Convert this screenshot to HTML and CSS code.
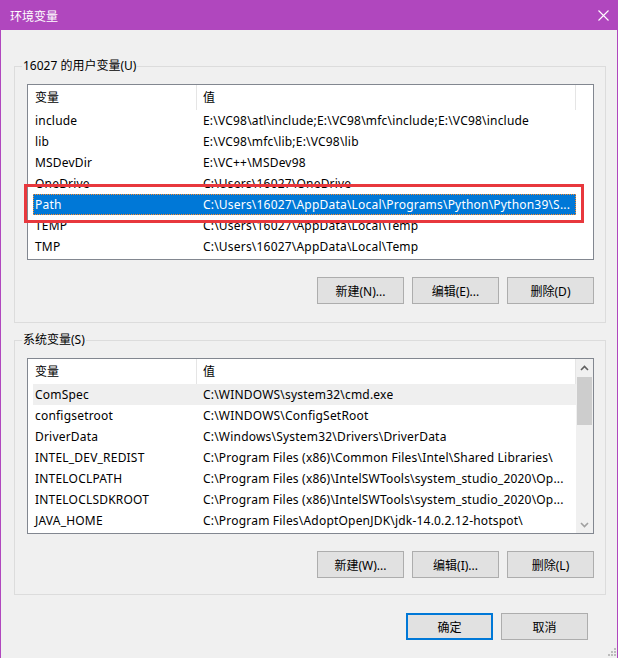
FILE: index.html
```html
<!DOCTYPE html>
<html lang="zh-CN">
<head>
  <meta charset="UTF-8">
  <title>环境变量</title>
  <link rel="stylesheet" href="styles.css">
</head>
<body>
  <div class="window">
    <div class="titlebar">
      <span class="title">环境变量</span>
      <svg class="close" width="11" height="11" viewBox="0 0 11 11">
        <path d="M0.5 0.5 L10.5 10.5 M10.5 0.5 L0.5 10.5" stroke="#fff" stroke-width="1.1" fill="none"/>
      </svg>
    </div>

    <div class="client">
      <fieldset class="group">
        <legend>16027 的用户变量(U)</legend>
        <div class="listbox">
          <div class="list-area">
            <div class="list-header">
              <div class="col-name">变量</div>
              <div class="col-value">值</div>
            </div>
            <div class="row"><span class="name">include</span><span class="value">E:\VC98\atl\include;E:\VC98\mfc\include;E:\VC98\include</span></div>
            <div class="row"><span class="name">lib</span><span class="value">E:\VC98\mfc\lib;E:\VC98\lib</span></div>
            <div class="row"><span class="name">MSDevDir</span><span class="value">E:\VC++\MSDev98</span></div>
            <div class="row"><span class="name">OneDrive</span><span class="value">C:\Users\16027\OneDrive</span></div>
            <div class="row selected"><span class="name">Path</span><span class="value">C:\Users\16027\AppData\Local\Programs\Python\Python39\S...</span></div>
            <div class="row"><span class="name">TEMP</span><span class="value">C:\Users\16027\AppData\Local\Temp</span></div>
            <div class="row"><span class="name">TMP</span><span class="value">C:\Users\16027\AppData\Local\Temp</span></div>
          </div>
          <div class="vscroll empty"></div>
        </div>
        <div class="buttons">
          <button class="btn">新建(N)...</button>
          <button class="btn">编辑(E)...</button>
          <button class="btn">删除(D)</button>
        </div>
      </fieldset>

      <fieldset class="group system">
        <legend>系统变量(S)</legend>
        <div class="listbox">
          <div class="list-area">
            <div class="list-header">
              <div class="col-name">变量</div>
              <div class="col-value">值</div>
            </div>
            <div class="row hover"><span class="name">ComSpec</span><span class="value">C:\WINDOWS\system32\cmd.exe</span></div>
            <div class="row"><span class="name">configsetroot</span><span class="value">C:\WINDOWS\ConfigSetRoot</span></div>
            <div class="row"><span class="name">DriverData</span><span class="value">C:\Windows\System32\Drivers\DriverData</span></div>
            <div class="row"><span class="name">INTEL_DEV_REDIST</span><span class="value">C:\Program Files (x86)\Common Files\Intel\Shared Libraries\</span></div>
            <div class="row"><span class="name">INTELOCLPATH</span><span class="value">C:\Program Files (x86)\IntelSWTools\system_studio_2020\Op...</span></div>
            <div class="row"><span class="name">INTELOCLSDKROOT</span><span class="value">C:\Program Files (x86)\IntelSWTools\system_studio_2020\Op...</span></div>
            <div class="row"><span class="name">JAVA_HOME</span><span class="value">C:\Program Files\AdoptOpenJDK\jdk-14.0.2.12-hotspot\</span></div>
          </div>
          <div class="vscroll">
            <div class="arrow">
              <svg width="9" height="6" viewBox="0 0 9 6"><path d="M1 5 L4.5 1.5 L8 5" stroke="#606060" stroke-width="1.6" fill="none"/></svg>
            </div>
            <div class="track"><div class="thumb"></div></div>
            <div class="arrow">
              <svg width="9" height="6" viewBox="0 0 9 6"><path d="M1 1 L4.5 4.5 L8 1" stroke="#a0a0a0" stroke-width="1.6" fill="none"/></svg>
            </div>
          </div>
        </div>
        <div class="buttons">
          <button class="btn">新建(W)...</button>
          <button class="btn">编辑(I)...</button>
          <button class="btn">删除(L)</button>
        </div>
      </fieldset>

      <div class="buttons dialog-buttons">
        <button class="btn default">确定</button>
        <button class="btn">取消</button>
      </div>
    </div>

    <!-- 红框标注 -->
    <div class="mark"></div>

    <svg class="grip" width="10" height="10" viewBox="0 0 10 10">
      <rect x="7" y="1" width="2" height="2" fill="#bcbcbc"/>
      <rect x="4" y="4" width="2" height="2" fill="#bcbcbc"/>
      <rect x="7" y="4" width="2" height="2" fill="#bcbcbc"/>
      <rect x="1" y="7" width="2" height="2" fill="#bcbcbc"/>
      <rect x="4" y="7" width="2" height="2" fill="#bcbcbc"/>
      <rect x="7" y="7" width="2" height="2" fill="#bcbcbc"/>
    </svg>
  </div>
</body>
</html>
```

FILE: styles.css
```css
/* 窗口颜色 */
:root {
  --accent: #b047be;
  --face: #f0f0f0;
  --group-border: #dcdcdc;
  --list-border: #828790;
  --btn-bg: #e1e1e1;
  --btn-border: #adadad;
  --select: #0078d7;
}

body {
  margin: 0;
  background: #fff;
  font-family: "Noto Sans", "Noto Sans CJK SC", sans-serif;
  font-size: 12px;
  color: #000;
}

.window {
  position: relative;
  width: 618px;
  height: 658px;
  box-sizing: border-box;
  border-left: 1px solid var(--accent);
  border-right: 1px solid var(--accent);
  background: var(--face);
  overflow: hidden;
}

.titlebar {
  height: 30px;
  background: var(--accent);
  color: #fff;
  display: flex;
  align-items: center;
  justify-content: space-between;
  padding: 0 8px 0 9px;
}

.title {
  font-family: "Noto Sans CJK SC", sans-serif;
  font-size: 12px;
}

.client {
  padding: 0 11px 0 13px;
}

.group {
  margin: 28px 0 0;
  padding: 10px 11px 18px 12px;
  border: 1px solid var(--group-border);
  min-width: 0;
}

.group.system {
  margin-top: 9px;
  padding-bottom: 16px;
}

.group legend {
  padding: 0 1px;
  margin-left: -5px;
  line-height: 16px;
}

.listbox {
  display: flex;
  height: 176px;
  box-sizing: border-box;
  border: 1px solid var(--list-border);
  background: #fff;
}

.list-area {
  flex: 1;
  min-width: 0;
}

.list-header {
  display: flex;
  height: 25px;
  line-height: 25px;
}

.list-header .col-name {
  width: 169px;
  box-sizing: border-box;
  padding-left: 7px;
  border-right: 1px solid #e5e5e5;
}

.list-header .col-value {
  flex: 1;
  padding-left: 6px;
  border-right: 1px solid #e5e5e5;
}

.row {
  display: flex;
  height: 21px;
  line-height: 21px;
  margin-left: 5px;
  white-space: nowrap;
  overflow: hidden;
  letter-spacing: 0.2px;
}

.row .name {
  width: 170px;
  flex-shrink: 0;
  box-sizing: border-box;
  padding-left: 2px;
}

.row .value {
  overflow: hidden;
}

.row.hover {
  background: #efefef;
}

.row.selected {
  background: var(--select);
  color: #fff;
  outline: 1px dotted #ff8c2a;
  outline-offset: -1px;
}

.vscroll {
  width: 17px;
  display: flex;
  flex-direction: column;
  background: var(--face);
}

.vscroll.empty {
  background: #fff;
}

.vscroll .arrow {
  height: 17px;
  display: flex;
  align-items: center;
  justify-content: center;
}

.vscroll .track {
  flex: 1;
  padding-top: 1px;
}

.vscroll .thumb {
  height: 48px;
  margin: 0 1px;
  background: #cdcdcd;
}

.buttons {
  display: flex;
  justify-content: flex-end;
  gap: 8px;
  margin-top: 17px;
}

.btn {
  width: 87px;
  height: 27px;
  box-sizing: border-box;
  background: var(--btn-bg);
  border: 1px solid var(--btn-border);
  font: inherit;
  color: #000;
  padding: 0;
}

.btn.default {
  border: 2px solid var(--select);
}

.dialog-buttons {
  margin-top: 18px;
  padding-right: 18px;
}

/* 标注框 */
.mark {
  position: absolute;
  left: 23px;
  top: 184px;
  width: 560px;
  height: 39px;
  box-sizing: border-box;
  border: 3px solid #e8383d;
}

.grip {
  position: absolute;
  right: 0;
  bottom: 1px;
}
```
